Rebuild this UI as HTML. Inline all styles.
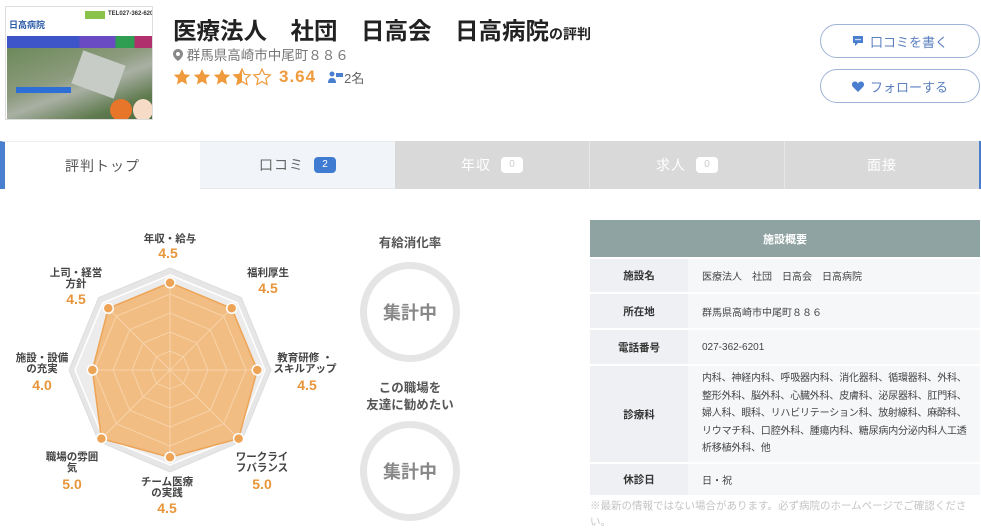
<!DOCTYPE html>
<html><head><meta charset="utf-8"><style>
*{margin:0;padding:0;box-sizing:border-box}
body{width:981px;height:532px;overflow:hidden;background:#fff;font-family:"Liberation Sans","Noto Sans CJK JP",sans-serif;color:#333;position:relative}
.a{position:absolute}
.tab{position:absolute;top:141px;height:48px;display:flex;align-items:center;justify-content:center;font-size:14px;letter-spacing:1px}
.badge{display:inline-block;margin-left:10px;width:22px;height:16px;border-radius:4px;font-size:10px;line-height:16px;text-align:center;letter-spacing:0}
.btn{position:absolute;left:820px;width:160px;height:34px;border:1px solid #9fb3d6;border-radius:17px;color:#5b7fbf;font-size:13px;display:flex;align-items:center;justify-content:center;gap:6px}
table{position:absolute;left:590px;top:220px;width:390px;border-collapse:collapse;font-size:10px}
td{border-bottom:2px solid #fff;padding:0 6px 0 14px;background:#f6f7f9;color:#444}
td.l{width:98px;text-align:center;font-weight:bold;background:#eef0f3;font-size:10.5px;padding:0;color:#333}
.lab{position:absolute;font-size:10.5px;color:#444;text-align:center;line-height:11px;font-weight:bold;transform:translateX(-50%);white-space:nowrap}
.val{position:absolute;font-size:14px;color:#e8953a;font-weight:bold;transform:translateX(-50%)}
</style></head><body>
<div class="a" style="left:5px;top:6px;width:148px;height:114px;border:1px solid #ddd;background:#fff;overflow:hidden">
 <div class="a" style="left:1px;top:1px;width:145px;height:28px;background:#fff">
  <div class="a" style="left:2px;top:10px;font-size:9px;font-weight:bold;color:#2a5aa8">日高病院</div>
  <div class="a" style="left:78px;top:3px;width:20px;height:8px;background:#8bc34a"></div>
  <div class="a" style="left:101px;top:3px;font-size:6px;font-weight:bold;color:#333;white-space:nowrap">TEL027-362-620</div>
 </div>
 <div class="a" style="left:1px;top:29px;width:145px;height:12px;background:linear-gradient(90deg,#3d55c9 0,#3d55c9 50%,#6a4bc4 50%,#6a4bc4 75%,#2f9e53 75%,#2f9e53 88%,#b0306e 88%)"></div>
 <div class="a" style="left:1px;top:41px;width:145px;height:72px;background:linear-gradient(160deg,#6d8a5a,#8c9b7d 40%,#a9b0a4 55%,#5f7a4e 80%,#4d6a3e)"></div>
 <div class="a" style="left:70px;top:50px;width:45px;height:35px;background:#c8ccc6;transform:rotate(20deg)"></div>
 <div class="a" style="left:10px;top:80px;width:55px;height:6px;background:#2d6fd6"></div>
 <div class="a" style="left:104px;top:92px;width:22px;height:22px;border-radius:50%;background:#e7762a"></div>
 <div class="a" style="left:127px;top:92px;width:20px;height:22px;border-radius:50%;background:#f6dcc6"></div>
</div>
<div class="a" style="left:173px;top:12px;font-size:23.5px;font-weight:bold;color:#222;white-space:nowrap">医療法人　社団　日高会　日高病院<span style="font-size:14px">の評判</span></div>
<div class="a" style="left:173px;top:44px;font-size:13.5px;color:#777;white-space:nowrap"><svg width="10" height="12" viewBox="0 0 10 12" style="vertical-align:-1px"><path d="M5 0C2.2 0 0 2.2 0 5c0 3.5 5 7 5 7s5-3.5 5-7C10 2.2 7.8 0 5 0zm0 7a2 2 0 110-4 2 2 0 010 4z" fill="#888"/></svg> 群馬県高崎市中尾町８８６</div>
<div class="a" style="left:173px;top:66px;white-space:nowrap;display:flex;align-items:center">
 <svg width="100" height="22" viewBox="0 0 100 22">
  <defs><path id="s" d="M9 1l2.4 5.3 5.8.6-4.3 3.9 1.2 5.7L9 13.6 3.9 16.5l1.2-5.7L.8 6.9l5.8-.6z"/>
  <clipPath id="h"><rect x="0" y="0" width="9" height="20"/></clipPath></defs>
  <use href="#s" x="0" y="2" fill="#ef9a3c"/><use href="#s" x="20" y="2" fill="#ef9a3c"/><use href="#s" x="40" y="2" fill="#ef9a3c"/>
  <use href="#s" x="60" y="2" fill="none" stroke="#ef9a3c" stroke-width="1.2"/>
  <g transform="translate(60,0)"><use href="#s" x="0" y="2" fill="#ef9a3c" clip-path="url(#h)"/></g>
  <use href="#s" x="80" y="2" fill="none" stroke="#ef9a3c" stroke-width="1.2"/>
 </svg>
 <span style="font-size:17px;font-weight:bold;color:#ef9a3c;margin-left:6px;letter-spacing:1px">3.64</span>
 <svg width="16" height="12" viewBox="0 0 16 12" style="margin-left:12px"><circle cx="4" cy="3" r="2.5" fill="#4a7fd0"/><path d="M0 12c0-4 2-5 4-5s4 1 4 5z" fill="#4a7fd0"/><rect x="8" y="2" width="7" height="4" fill="#4a7fd0"/></svg>
 <span style="font-size:13px;color:#666">2名</span>
</div>
<div class="btn" style="top:24px"><svg width="12" height="12" viewBox="0 0 12 12"><path d="M1 1h10v7H6l-3 3V8H1z" fill="#4a7fd0"/><circle cx="4" cy="4.5" r=".8" fill="#fff"/><circle cx="6" cy="4.5" r=".8" fill="#fff"/><circle cx="8" cy="4.5" r=".8" fill="#fff"/></svg>口コミを書く</div>
<div class="btn" style="top:69px"><svg width="12" height="11" viewBox="0 0 12 11"><path d="M6 11L1 6C-1 4 0 .5 3 .5c1.5 0 2.5 1 3 2 .5-1 1.5-2 3-2 3 0 4 3.5 2 5.5z" fill="#4a7fd0"/></svg>フォローする</div>
<div class="tab" style="left:0;width:200px;background:#fff;border-left:5px solid #4a7fd0;border-top:1px solid #eee;color:#555">評判トップ</div>
<div class="tab" style="left:200px;width:195px;background:#f1f4f8;border-top:1px solid #e6e9ee;border-bottom:1px solid #e6e9ee;color:#666">口コミ<span class="badge" style="background:#3f7bd0;color:#fff">2</span></div>
<div class="tab" style="left:395px;width:195px;background:#d9d9d9;color:#fff;border-right:1px solid #e6e6e6">年収<span class="badge" style="background:#fff;color:#ccc">0</span></div>
<div class="tab" style="left:590px;width:195px;background:#d9d9d9;color:#fff;border-right:1px solid #e6e6e6">求人<span class="badge" style="background:#fff;color:#ccc">0</span></div>
<div class="tab" style="left:785px;width:196px;background:#d9d9d9;color:#fff;border-right:2px solid #4a7fd0">面接</div>
<svg class="a" style="left:0;top:0" width="340" height="532">
 <polygon points="170,268 241.4,297.6 271,370 241.4,441.4 170,472 98.6,441.4 69,370 98.6,297.6" fill="#e6e6e6" stroke="#ddd"/>
 <polygon points="170,275 237.2,302.8 265,370 237.2,437.2 170,465 102.8,437.2 75,370 102.8,302.8" fill="#ececec" stroke="#fff" stroke-width="1.5"/>
 <polygon points="170,282.7 231.7,308.3 257.3,370 238.6,438.6 170,457.3 101.4,438.6 92.4,370 108.3,308.3" fill="#f2bd82" stroke="#eda456" stroke-width="1.5"/>
 <g fill="none" stroke="#f7d3aa" stroke-width="1">
  <polygon points="170,351 183.4,356.6 189,370 183.4,383.4 170,389 156.6,383.4 151,370 156.6,356.6"/>
  <polygon points="170,332 196.9,343.1 208,370 196.9,396.9 170,408 143.1,396.9 132,370 143.1,343.1"/>
  <polygon points="170,313 210.3,329.7 227,370 210.3,410.3 170,427 129.7,410.3 113,370 129.7,329.7"/>
  <polygon points="170,294 223.7,316.3 246,370 223.7,423.7 170,446 116.3,423.7 94,370 116.3,316.3"/>
  <path d="M170,282.7V457.3M92.4,370H257.3M108.3,308.3L238.6,438.6M231.7,308.3L101.4,438.6"/>
 </g>
 <g fill="#eda456" stroke="#fff" stroke-width="1.5">
  <circle cx="170" cy="282.7" r="5"/><circle cx="231.7" cy="308.3" r="5"/><circle cx="257.3" cy="370" r="5"/><circle cx="238.6" cy="438.6" r="5"/><circle cx="170" cy="457.3" r="5"/><circle cx="101.4" cy="438.6" r="5"/><circle cx="92.4" cy="370" r="5"/><circle cx="108.3" cy="308.3" r="5"/>
 </g>
</svg>
<div class="lab" style="left:170px;top:234px">年収・給与</div><div class="val" style="left:168px;top:245px">4.5</div>
<div class="lab" style="left:268px;top:268px">福利厚生</div><div class="val" style="left:268px;top:280px">4.5</div>
<div class="lab" style="left:76px;top:268px">上司・経営<br>方針</div><div class="val" style="left:76px;top:291px">4.5</div>
<div class="lab" style="left:305px;top:353px">教育研修 ・<br>スキルアップ</div><div class="val" style="left:307px;top:377px">4.5</div>
<div class="lab" style="left:42px;top:353px">施設・設備<br>の充実</div><div class="val" style="left:42px;top:377px">4.0</div>
<div class="lab" style="left:262px;top:452px">ワークライ<br>フバランス</div><div class="val" style="left:262px;top:476px">5.0</div>
<div class="lab" style="left:72px;top:452px">職場の雰囲<br>気</div><div class="val" style="left:72px;top:476px">5.0</div>
<div class="lab" style="left:167px;top:477px">チーム医療<br>の実践</div><div class="val" style="left:167px;top:500px">4.5</div>
<div class="a" style="left:360px;top:232px;width:100px;text-align:center;font-size:12.5px;font-weight:bold;color:#555">有給消化率</div>
<div class="a" style="left:360px;top:262px;width:100px;height:100px;border:7px solid #e5e5e5;border-radius:50%;display:flex;align-items:center;justify-content:center;font-size:18px;font-weight:bold;color:#888">集計中</div>
<div class="a" style="left:350px;top:380px;width:120px;text-align:center;font-size:12.5px;font-weight:bold;color:#555;line-height:17px">この職場を<br>友達に勧めたい</div>
<div class="a" style="left:360px;top:421px;width:100px;height:100px;border:7px solid #e5e5e5;border-radius:50%;display:flex;align-items:center;justify-content:center;font-size:18px;font-weight:bold;color:#888">集計中</div>
<table>
<tr><td colspan="2" style="background:#8fa3a2;color:#fff;text-align:center;font-weight:bold;height:38px;font-size:11px;padding:0">施設概要</td></tr>
<tr style="height:35px"><td class="l">施設名</td><td>医療法人　社団　日高会　日高病院</td></tr>
<tr style="height:36px"><td class="l">所在地</td><td>群馬県高崎市中尾町８８６</td></tr>
<tr style="height:36px"><td class="l">電話番号</td><td>027-362-6201</td></tr>
<tr style="height:98px"><td class="l">診療科</td><td style="line-height:17.5px;letter-spacing:-0.2px">内科、神経内科、呼吸器内科、消化器科、循環器科、外科、整形外科、脳外科、心臓外科、皮膚科、泌尿器科、肛門科、婦人科、眼科、リハビリテーション科、放射線科、麻酔科、リウマチ科、口腔外科、腫瘍内科、糖尿病内分泌内科人工透析移植外科、他</td></tr>
<tr style="height:33px"><td class="l">休診日</td><td>日・祝</td></tr>
</table>
<div class="a" style="left:590px;top:498px;width:388px;font-size:10.5px;color:#c4c4c4;line-height:16px">※最新の情報ではない場合があります。必ず病院のホームページでご確認ください。</div>
</body></html>
